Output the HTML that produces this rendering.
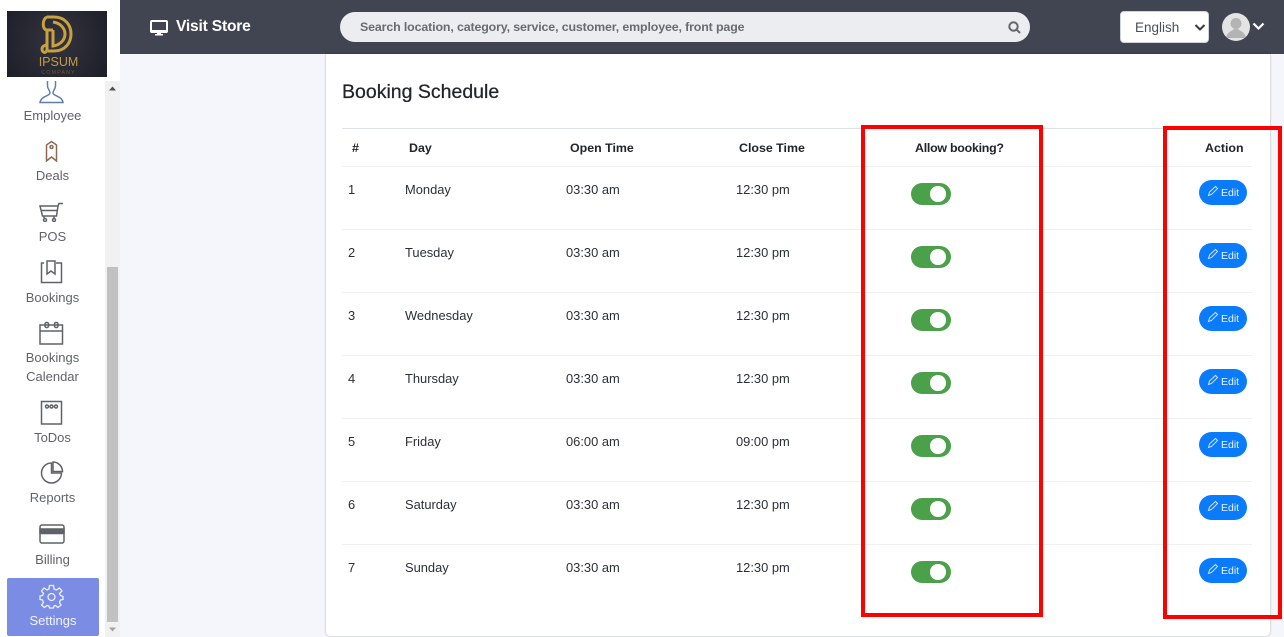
<!DOCTYPE html>
<html><head><meta charset="utf-8"><style>
html,body{margin:0;padding:0}
body{width:1284px;height:637px;overflow:hidden;position:relative;background:#f5f6fb;font-family:"Liberation Sans",Arial,sans-serif;color:#212529;font-size:13px}
.a{position:absolute;white-space:nowrap}
.nav{position:absolute;left:0;width:105px;text-align:center;color:#5f6368;font-size:13px;line-height:19px}
.th{position:absolute;top:140px;font-weight:bold;font-size:12.4px;line-height:16px;white-space:nowrap;color:#212529}
.c{position:absolute;font-size:12.9px;line-height:16px;white-space:nowrap;color:#2b3038;margin-top:1px}
.ln{position:absolute;left:342px;width:910px;height:1px;background:#eef0f2}
.tg{position:absolute;left:911px;width:40px;height:22px;border-radius:11px;background:#4ba04a}
.tg:after{content:"";position:absolute;left:19px;top:3px;width:15.5px;height:15.5px;border-radius:50%;background:#fff}
.btn{position:absolute;left:1199px;width:48px;height:25px;border-radius:13px;background:#0a7bfb;color:#eaf3ff;font-size:10.5px;line-height:25px}
.btn span{position:absolute;left:22px;top:1px}
.btn svg{position:absolute;left:8px;top:5px}
.red{position:absolute;border:4px solid #f00;box-sizing:border-box}
svg{display:block}
.ic{position:absolute;fill:none;stroke:#5f6368;stroke-width:1.5}
</style></head><body>

<!-- sidebar -->
<div class="a" style="left:0;top:0;width:120px;height:637px;background:#fff"></div>
<div class="a" style="left:105px;top:81px;width:15px;height:556px;background:#f1f1f1"></div>
<div class="a" style="left:107px;top:267px;width:11px;height:355px;background:#c1c1c1"></div>
<svg class="a" style="left:107px;top:84px" width="11" height="8"><path d="M2 6.500L5.500 2.500L9 6.500Z" fill="#505050"/></svg>
<svg class="a" style="left:107px;top:626px" width="11" height="8"><path d="M2 1.500L9 1.500L5.500 5.500Z" fill="#a3a3a3"/></svg>

<div class="a" style="left:7px;top:11px;width:100px;height:66px;background:radial-gradient(circle at 50% 45%,#33343f,#1d1e27)"></div>
<svg class="a" style="left:7px;top:11px" width="100" height="66" fill="none" stroke="#c9a13f" stroke-width="3">
<path d="M40 6H47C58 6 64 14 64 23C64 32 58 40 47 40H41"/>
<path d="M46 11C53 12 58 17 58 23C58 29 53 34 46 35V19"/>
<path d="M46 19H40C35 19 35 8 40 6M40 19V38C40 43 35 42 35 38C35 35 38 34 41 34"/>
</svg>
<div class="a" style="left:8.500px;top:55px;width:100px;text-align:center;color:#c49c40;font-size:12.500px;line-height:15px">IPSUM</div>
<div class="a" style="left:8.500px;top:69px;width:100px;text-align:center;color:#6d5a2c;font-size:5.500px;line-height:8px;letter-spacing:1px">COMPANY</div>

<svg class="ic" style="left:39px;top:81px" width="26" height="24"><path d="M8.500 0V5C8.500 8 11 9 11 12C11 15 2 15 1 21.500H24C23 15 14 15 14 12C14 9 16.500 8 16.500 5V0" stroke="#5f7fa8"/></svg>
<div class="nav" style="top:106px">Employee</div>
<svg class="ic" style="left:45px;top:140px" width="14" height="22"><path d="M1.500 21V5L6.500 1.500L11.500 5V21L6.500 17Z" stroke="#8a6a55"/><circle cx="6.500" cy="7" r="1.500" stroke="#8a6a55"/></svg>
<div class="nav" style="top:166px">Deals</div>
<svg class="ic" style="left:39px;top:202px" width="25" height="20"><path d="M1 4H19L17.500 14H3.500ZM19 4L20 1.500H24M2 8.500H18M5 14V16M15 14V16"/><circle cx="6" cy="18" r="1.500"/><circle cx="15" cy="18" r="1.500"/></svg>
<div class="nav" style="top:227px">POS</div>
<svg class="ic" style="left:40px;top:260px" width="23" height="24"><path d="M4 3H1.500V22.500H21.500V3H16M7 1H15V14L11 11L7 14Z"/></svg>
<div class="nav" style="top:288px">Bookings</div>
<svg class="ic" style="left:39px;top:321px" width="25" height="24"><path d="M1 4H23.500V23H1ZM1 10H23.500"/><rect x="6" y="1.500" width="3.500" height="5" rx="1.500"/><rect x="15.500" y="1.500" width="3.500" height="5" rx="1.500"/></svg>
<div class="nav" style="top:348px">Bookings</div>
<div class="nav" style="top:367px">Calendar</div>
<svg class="ic" style="left:40px;top:400px" width="23" height="25"><path d="M1.500 1.500H21.500V24H1.500Z"/><circle cx="7" cy="6.500" r="1.500"/><circle cx="11.500" cy="6.500" r="1.500"/><circle cx="16" cy="6.500" r="1.500"/></svg>
<div class="nav" style="top:428px">ToDos</div>
<svg class="ic" style="left:40px;top:460px" width="24" height="24"><path d="M11.500 3A10 10 0 1 0 21.500 13H11.500Z"/><path d="M13 2A9.500 9.500 0 0 1 22.500 11.500H13Z"/></svg>
<div class="nav" style="top:488px">Reports</div>
<svg class="ic" style="left:39px;top:524px" width="26" height="20"><rect x="1" y="1" width="24" height="18" rx="2"/><rect x="1" y="5" width="24" height="4.500" fill="#5f6368"/></svg>
<div class="nav" style="top:550px">Billing</div>
<div class="a" style="left:7px;top:578px;width:92px;height:58px;background:#7a8ce3;border-radius:2px"></div>
<svg class="a" style="left:39px;top:584px" width="25" height="25" fill="none" stroke="#eef1ff" stroke-width="1.300"><path d="M10.500 1.500H14.500L15 5L17.500 6L20.500 4L23 7L20.500 9.500L21.500 11.500L24 12.500V15.500L21.500 16L20.500 18.500L22 21L19 23.500L16.500 21.500L15 22L14.500 24H10.500L10 22L8 21.500L5.500 23.500L2.500 21L4.500 18.500L3.500 16L1 15.500V12L3.500 11.500L4.500 9.500L2.500 7L5 4L8 6L10 5Z"/><circle cx="12.500" cy="13" r="3.500"/></svg>
<div class="nav" style="left:7px;width:92px;top:611px;color:#f1f3ff">Settings</div>

<!-- header -->
<div class="a" style="left:120px;top:0;width:1164px;height:54px;background:#414551"></div>
<svg class="a" style="left:150px;top:20px" width="18" height="16"><rect x="1" y="1" width="16" height="11" rx="1" fill="#414551" stroke="#fff" stroke-width="2"/><rect x="1" y="10" width="16" height="3" fill="#fff"/><rect x="7" y="13" width="4" height="1.500" fill="#fff"/><rect x="5" y="14" width="8" height="1.500" fill="#fff"/></svg>
<div class="a" style="left:176px;top:17px;color:#fff;font-size:15.600px;line-height:20px;font-weight:bold;letter-spacing:-.2px">Visit Store</div>
<div class="a" style="left:340px;top:12px;width:690px;height:30px;border-radius:15px;background:#ecedf0"></div>
<div class="a" style="left:360px;top:19px;color:#686b72;font-size:12.400px;line-height:16px;font-weight:bold;letter-spacing:-.13px">Search location, category, service, customer, employee, front page</div>
<svg class="a" style="left:1007px;top:20px" width="15" height="15" fill="none" stroke="#62666e" stroke-width="2"><circle cx="6.500" cy="6.500" r="4.200"/><path d="M9.800 9.800L13 13"/></svg>
<div class="a" style="left:1120px;top:11px;width:89px;height:32px;background:#fff;border-radius:4px;box-sizing:border-box;border:1px solid #ced4da"></div>
<div class="a" style="left:1135px;top:20px;font-size:13.500px;line-height:16px;color:#495057">English</div>
<svg class="a" style="left:1194px;top:23px" width="12" height="9" fill="none" stroke="#343a40" stroke-width="2"><path d="M1.500 2L6 6.500L10.500 2"/></svg>
<div class="a" style="left:1222px;top:13px;width:28px;height:28px;border-radius:50%;background:#e4e4e4;overflow:hidden">
<svg width="28" height="28"><circle cx="14" cy="10.500" r="5.500" fill="#b4b4b4"/><path d="M4 25C5 19 10 18 12 16H16C18 18 23 19 24 25Z" fill="#b4b4b4"/></svg></div>
<svg class="a" style="left:1252px;top:21px" width="13" height="11" fill="none" stroke="#fff" stroke-width="2.200"><path d="M1.500 2.500L6.500 7.500L11.500 2.500"/></svg>

<!-- card -->
<div class="a" style="left:326px;top:54px;width:944px;height:582px;background:#fff;border-radius:0 0 4px 4px;box-shadow:0 0 2px rgba(0,0,0,.3)"></div>
<div class="a" style="left:342px;top:80px;font-size:19.500px;line-height:24px;color:#212529;-webkit-text-stroke:.25px #212529">Booking Schedule</div>
<div class="ln" style="top:128px;background:#dee2e6"></div>
<div class="th" style="left:352px">#</div>
<div class="th" style="left:409px">Day</div>
<div class="th" style="left:570px">Open Time</div>
<div class="th" style="left:739px">Close Time</div>
<div class="th" style="left:915px;letter-spacing:-.25px">Allow booking?</div>
<div class="th" style="left:1205px">Action</div>

<div class="ln" style="top:166px"></div>
<div class="ln" style="top:229px"></div>
<div class="ln" style="top:292px"></div>
<div class="ln" style="top:355px"></div>
<div class="ln" style="top:418px"></div>
<div class="ln" style="top:481px"></div>
<div class="ln" style="top:544px"></div>

<div class="c" style="left:348px;top:181px">1</div><div class="c" style="left:405px;top:181px">Monday</div><div class="c" style="left:566px;top:181px">03:30 am</div><div class="c" style="left:736px;top:181px">12:30 pm</div>
<div class="c" style="left:348px;top:244px">2</div><div class="c" style="left:405px;top:244px">Tuesday</div><div class="c" style="left:566px;top:244px">03:30 am</div><div class="c" style="left:736px;top:244px">12:30 pm</div>
<div class="c" style="left:348px;top:307px">3</div><div class="c" style="left:405px;top:307px">Wednesday</div><div class="c" style="left:566px;top:307px">03:30 am</div><div class="c" style="left:736px;top:307px">12:30 pm</div>
<div class="c" style="left:348px;top:370px">4</div><div class="c" style="left:405px;top:370px">Thursday</div><div class="c" style="left:566px;top:370px">03:30 am</div><div class="c" style="left:736px;top:370px">12:30 pm</div>
<div class="c" style="left:348px;top:433px">5</div><div class="c" style="left:405px;top:433px">Friday</div><div class="c" style="left:566px;top:433px">06:00 am</div><div class="c" style="left:736px;top:433px">09:00 pm</div>
<div class="c" style="left:348px;top:496px">6</div><div class="c" style="left:405px;top:496px">Saturday</div><div class="c" style="left:566px;top:496px">03:30 am</div><div class="c" style="left:736px;top:496px">12:30 pm</div>
<div class="c" style="left:348px;top:559px">7</div><div class="c" style="left:405px;top:559px">Sunday</div><div class="c" style="left:566px;top:559px">03:30 am</div><div class="c" style="left:736px;top:559px">12:30 pm</div>

<div class="tg" style="top:183px"></div>
<div class="tg" style="top:246px"></div>
<div class="tg" style="top:309px"></div>
<div class="tg" style="top:372px"></div>
<div class="tg" style="top:435px"></div>
<div class="tg" style="top:498px"></div>
<div class="tg" style="top:561px"></div>

<div class="btn" style="top:180px"><svg width="12" height="12" fill="none" stroke="#cfe2ff" stroke-width="1"><path d="M1.500 10.500L2.500 7L8.500 1.500L10.500 3.500L4.500 9.500Z"/></svg><span>Edit</span></div>
<div class="btn" style="top:243px"><svg width="12" height="12" fill="none" stroke="#cfe2ff" stroke-width="1"><path d="M1.500 10.500L2.500 7L8.500 1.500L10.500 3.500L4.500 9.500Z"/></svg><span>Edit</span></div>
<div class="btn" style="top:306px"><svg width="12" height="12" fill="none" stroke="#cfe2ff" stroke-width="1"><path d="M1.500 10.500L2.500 7L8.500 1.500L10.500 3.500L4.500 9.500Z"/></svg><span>Edit</span></div>
<div class="btn" style="top:369px"><svg width="12" height="12" fill="none" stroke="#cfe2ff" stroke-width="1"><path d="M1.500 10.500L2.500 7L8.500 1.500L10.500 3.500L4.500 9.500Z"/></svg><span>Edit</span></div>
<div class="btn" style="top:432px"><svg width="12" height="12" fill="none" stroke="#cfe2ff" stroke-width="1"><path d="M1.500 10.500L2.500 7L8.500 1.500L10.500 3.500L4.500 9.500Z"/></svg><span>Edit</span></div>
<div class="btn" style="top:495px"><svg width="12" height="12" fill="none" stroke="#cfe2ff" stroke-width="1"><path d="M1.500 10.500L2.500 7L8.500 1.500L10.500 3.500L4.500 9.500Z"/></svg><span>Edit</span></div>
<div class="btn" style="top:558px"><svg width="12" height="12" fill="none" stroke="#cfe2ff" stroke-width="1"><path d="M1.500 10.500L2.500 7L8.500 1.500L10.500 3.500L4.500 9.500Z"/></svg><span>Edit</span></div>

<div class="red" style="left:861px;top:125px;width:182px;height:492px"></div>
<div class="red" style="left:1163px;top:126px;width:119px;height:493px"></div>
</body></html>
